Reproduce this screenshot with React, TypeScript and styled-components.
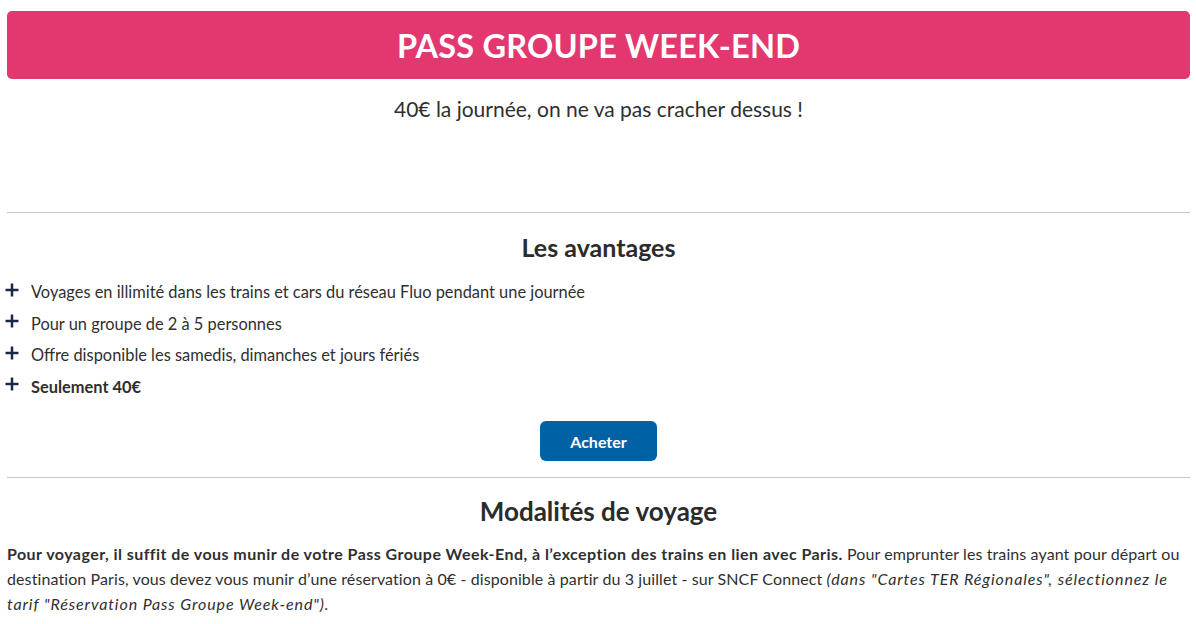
import * as React from 'react';
import styled, { createGlobalStyle } from 'styled-components';

const GlobalStyle = createGlobalStyle`
  body {
    margin: 0;
    background: #ffffff;
    font-family: Lato, "Open Sans", sans-serif;
    color: #2f2f2f;
  }
`;

const advantages = [
  { label: 'Voyages en illimité dans les trains et cars du réseau Fluo pendant une journée' },
  { label: 'Pour un groupe de 2 à 5 personnes' },
  { label: 'Offre disponible les samedis, dimanches et jours fériés' },
  { label: 'Seulement 40€', strong: true },
];

const PlusIcon = () => (
  <svg width="14" height="14" viewBox="0 0 14 14" aria-hidden="true">
    <path d="M7 0.5v13M0.5 7h13" stroke="#1b2747" strokeWidth="2.5" fill="none" />
  </svg>
);

const App: React.FC = () => {
  return (
    <>
      <GlobalStyle />
      <Page>
        <Banner>
          <BannerTitle>PASS GROUPE WEEK-END</BannerTitle>
        </Banner>
        <Intro>40€ la journée, on ne va pas cracher dessus !</Intro>

        <Divider />

        <SectionTitle $top={19} $size={25}>
          Les avantages
        </SectionTitle>
        <AdvantageList>
          {advantages.map((item) => (
            <AdvantageItem key={item.label} $strong={item.strong}>
              <PlusIcon />
              <span>{item.label}</span>
            </AdvantageItem>
          ))}
        </AdvantageList>
        <Actions>
          <BuyButton type="button">Acheter</BuyButton>
        </Actions>

        <Divider />

        <SectionTitle $top={18} $size={26}>
          Modalités de voyage
        </SectionTitle>
        <Paragraph>
          <strong>
            Pour voyager, il suffit de vous munir de votre Pass Groupe Week-End, à l’exception des trains
            en lien avec Paris.
          </strong>{' '}
          Pour emprunter les trains ayant pour départ ou destination Paris, vous devez vous munir d’une
          réservation à 0€ - disponible à partir du 3 juillet - sur SNCF Connect{' '}
          <em>
            (dans "Cartes TER Régionales", sélectionnez le tarif "Réservation Pass Groupe Week-end").
          </em>
        </Paragraph>
      </Page>
    </>
  );
};

const Page = styled.main`
  display: flex;
  flex-direction: column;
  padding: 11px 6px 0 7px;
`;

const Banner = styled.header`
  height: 68px;
  display: flex;
  align-items: center;
  justify-content: center;
  background: #e3376f;
  border-radius: 5px;
`;

const BannerTitle = styled.h1`
  margin: 0;
  color: #ffffff;
  font-size: 32.5px;
  font-weight: 700;
  letter-spacing: 0.2px;
`;

const Intro = styled.p`
  margin: 16px 0 89px;
  text-align: center;
  font-size: 21px;
  line-height: 28px;
`;

const Divider = styled.hr`
  margin: 0;
  border: 0;
  height: 1px;
  background: #c6c6c6;
`;

const SectionTitle = styled.h2<{ $top: number; $size: number }>`
  margin: ${({ $top }) => $top}px 0 0;
  text-align: center;
  font-size: ${({ $size }) => $size}px;
  line-height: 30px;
  font-weight: 700;
  color: #2b2b2b;
`;

const AdvantageList = styled.ul`
  list-style: none;
  margin: 14px 0 0 -2px;
  padding: 0;
`;

const AdvantageItem = styled.li<{ $strong?: boolean }>`
  display: flex;
  align-items: center;
  gap: 12px;
  height: 31.5px;
  font-size: 16.4px;
  font-weight: ${({ $strong }) => ($strong ? 700 : 400)};

  svg {
    flex: none;
    margin-top: -4px;
  }
`;

const Actions = styled.div`
  display: flex;
  justify-content: center;
  padding: 19px 0 16px;
`;

const BuyButton = styled.button`
  width: 117px;
  height: 40px;
  border: 0;
  border-radius: 6px;
  background: #0061a5;
  color: #ffffff;
  font-family: inherit;
  font-size: 16px;
  font-weight: 700;
  cursor: pointer;
`;

const Paragraph = styled.p`
  margin: 15px 0 0;
  font-size: 16px;
  line-height: 25px;
  letter-spacing: 0.1px;

  strong {
    font-weight: 700;
    letter-spacing: 0.45px;
  }

  em {
    letter-spacing: 0.9px;
  }
`;

export default App;
